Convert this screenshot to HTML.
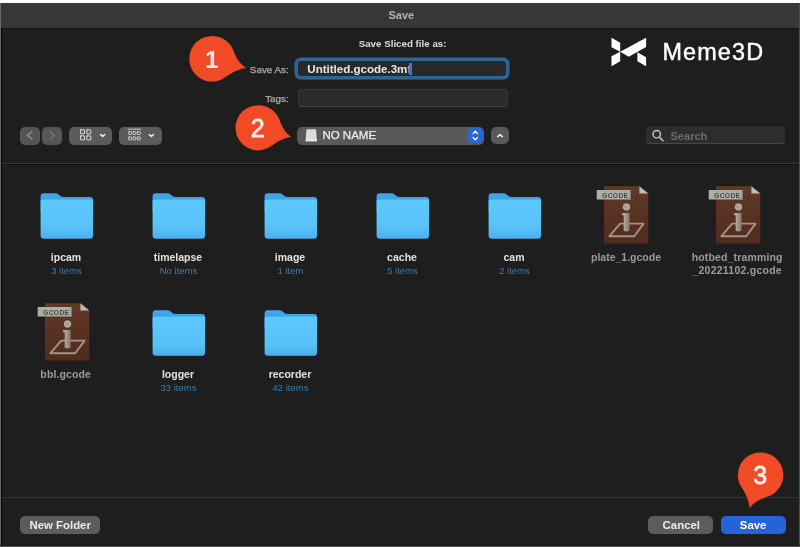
<!DOCTYPE html>
<html lang="en">
<head>
<meta charset="utf-8">
<title>Save</title>
<style>
*{box-sizing:border-box;margin:0;padding:0}
html,body{width:800px;height:547px;overflow:hidden;background:#1e1e1e}
body{font-family:"Liberation Sans",sans-serif;position:relative}
.win{filter:blur(0.45px);position:absolute;left:0;top:0;width:800px;height:547px;background:#1e1e1e;overflow:hidden}
.strip{position:absolute;left:0;top:0;width:800px;height:3px;background:#fff}
.edge-l{position:absolute;left:0;top:3px;width:1px;height:544px;background:#686868}
.edge-l2{position:absolute;left:1px;top:28px;width:1px;height:518px;background:#080808}
.edge-r{position:absolute;left:798.7px;top:3px;width:1.3px;height:544px;background:#4c4c4c}
.edge-b{position:absolute;left:0;top:545px;width:800px;height:2px;background:linear-gradient(180deg,#1a1a1a 0,#1a1a1a 0.7px,#565656 0.7px)}
.titlebar{position:absolute;left:0;top:3px;width:800px;height:26px;background:#373737;border-bottom:1px solid #121212}
.t{position:absolute;white-space:nowrap;line-height:1}
.c{width:200px;text-align:center}
.r{width:200px;text-align:right}
.b{font-weight:bold}
.btn{position:absolute;background:#5b5b5b;border-radius:5px}
.sep{position:absolute;left:2px;width:797px;height:1px;background:#353535}
.ico{position:absolute;overflow:visible}
.name{color:#e2e2e2;font-size:10.5px;font-weight:bold}
.gname{color:#9b9b9b;font-size:10.5px;font-weight:bold}
.cnt{color:#3c7cb0;font-size:9.5px}
</style>
</head>
<body>
<div class="win">
  <div class="titlebar"></div>
  <div class="t c b" style="left:301.4px;top:9.9px;font-size:11px;color:#b2b2b2">Save</div>

  <!-- HEADER -->
  <div class="t b" style="left:358.7px;top:39px;font-size:9.75px;color:#dedede">Save Sliced file as:</div>

  <div class="t r" style="left:88.8px;top:64.9px;font-size:9.9px;color:#b0b0b0;-webkit-text-stroke:0.25px #b0b0b0">Save As:</div>
  <div style="position:absolute;left:298px;top:61px;width:208px;height:15.4px;background:#29292b;border-radius:3px;box-shadow:0 0 0 3.3px #2d6694,0 0 0.5px 3.9px #1a3f60"></div>
  <div class="t b" style="left:307.3px;top:63.7px;font-size:11.55px;color:#e9e9e9">Untitled.gcode.3mf</div>
  <div style="position:absolute;left:409.3px;top:62.5px;width:2.6px;height:12.8px;background:#3b7bd6"></div>

  <div class="t r" style="left:88.8px;top:93.8px;font-size:9.9px;color:#b0b0b0;-webkit-text-stroke:0.25px #b0b0b0">Tags:</div>
  <div style="position:absolute;left:298px;top:89px;width:210px;height:17.5px;background:#2b2b2b;border:1px solid #383838;border-bottom-color:#464646;border-radius:4px"></div>

  <!-- logo -->
  <svg class="ico" style="left:600px;top:30px" width="60" height="45" viewBox="600 30 60 45">
    <g fill="#ffffff">
      <polygon points="611.5,37.8 620.2,42.8 620.2,51.8 611.5,47.3"/>
      <polygon points="611.5,56.3 620.2,51.8 620.2,61.3 611.5,66.2"/>
      <polygon points="620.2,51.8 646.1,37.8 646.1,46.9 628.8,56.7"/>
      <polygon points="637.4,52.2 646.1,57.2 646.1,66.2 637.4,61.3"/>
    </g>
  </svg>
  <div class="t" style="left:662.4px;top:40.6px;font-size:23.4px;color:#fff;letter-spacing:1.15px;-webkit-text-stroke:0.45px #fff">Meme3D</div>

  <!-- markers -->
  <svg class="ico" style="left:180px;top:30px" width="80" height="60" viewBox="180 30 80 60">
    <path d="M212 36 A22.8 22.8 0 1 0 226 76.8 C233 71.5 239 69 246 67.9 C240 64 236 58 233.6 51 A22.8 22.8 0 0 0 212 36 Z" fill="#f04a26"/>
    <text x="211.8" y="67.9" font-family="Liberation Sans, sans-serif" font-size="24.5" font-weight="bold" fill="#fdeee6" text-anchor="middle">1</text>
  </svg>
  <svg class="ico" style="left:225px;top:95px" width="80" height="60" viewBox="225 95 80 60">
    <path d="M258 105.2 A22.6 22.6 0 1 0 272 145.6 C279 140.3 284.5 138 291 136.7 C285.5 133 282 127 279.6 120 A22.6 22.6 0 0 0 258 105.2 Z" fill="#f04a26"/>
    <text x="257.7" y="137.2" font-family="Liberation Sans, sans-serif" font-size="25" fill="#fdeee6" stroke="#fdeee6" stroke-width="0.85" stroke-linejoin="round" text-anchor="middle">2</text>
  </svg>
  <!--HEADER-END-->

  <!-- TOOLBAR -->

  <div class="btn" style="left:20px;top:127px;width:20.3px;height:17.5px;background:#555"></div>
  <div class="btn" style="left:41.8px;top:127px;width:20.5px;height:17.5px;background:#555"></div>
  <div class="btn" style="left:69.3px;top:127px;width:42.7px;height:17.5px"></div>
  <div class="btn" style="left:119px;top:127px;width:42.6px;height:17.5px"></div>
  <svg class="ico" style="left:15px;top:120px" width="155" height="30" viewBox="15 120 155 30" fill="none" stroke-linecap="round" stroke-linejoin="round">
    <path d="M31.9 131.7 L27.4 135.3 L31.9 138.9" stroke="#8c8c8c" stroke-width="1.5"/>
    <path d="M50 131.7 L54.5 135.3 L50 138.9" stroke="#707070" stroke-width="1.5"/>
    <g stroke="#e8e8e8" stroke-width="0.9">
      <rect x="80.5" y="129.8" width="4" height="4" rx="0.4"/><rect x="86.8" y="129.8" width="4" height="4" rx="0.4"/>
      <rect x="80.5" y="135.9" width="4" height="4" rx="0.4"/><rect x="86.8" y="135.9" width="4" height="4" rx="0.4"/>
    </g>
    <path d="M100.5 134.5 L102.6 136.5 L104.7 134.5" stroke="#f0f0f0" stroke-width="1.5"/>
    <g stroke="#e4e4e4" stroke-width="0.8">
      <path d="M128.2 129.2 H140.6"/>
      <rect x="128.6" y="131.6" width="2.9" height="2.9" rx="0.5"/><rect x="133" y="131.6" width="2.9" height="2.9" rx="0.5"/><rect x="137.4" y="131.6" width="2.9" height="2.9" rx="0.5"/>
      <rect x="128.6" y="137" width="2.9" height="2.9" rx="0.5"/><rect x="133" y="137" width="2.9" height="2.9" rx="0.5"/><rect x="137.4" y="137" width="2.9" height="2.9" rx="0.5"/>
    </g>
    <path d="M149.3 134.5 L151.4 136.5 L153.5 134.5" stroke="#f0f0f0" stroke-width="1.5"/>
  </svg>

  <!-- path popup -->
  <div class="btn" style="left:297px;top:126.5px;width:186.6px;height:18px;background:#595959"></div>
  <div style="position:absolute;left:467.5px;top:127.6px;width:15.6px;height:15.8px;border-radius:4px;background:#2966d6"></div>
  <svg class="ico" style="left:300px;top:125px" width="30" height="22" viewBox="300 125 30 22">
    <path d="M307 129.3 H315.6 Q316.1 129.3 316.2 129.9 L316.8 139.5 V140.7 Q316.8 141.3 316.2 141.3 H306.3 Q305.7 141.3 305.7 140.7 V139.5 L306.4 129.9 Q306.5 129.3 307 129.3 Z" fill="#dadada"/>
    <path d="M305.7 139.4 H316.8 V140.7 Q316.8 141.3 316.2 141.3 H306.3 Q305.7 141.3 305.7 140.7 Z" fill="#efefef"/>
  </svg>
  <div class="t" style="left:322.4px;top:130.2px;font-size:11.5px;color:#ececec;-webkit-text-stroke:0.25px #ececec">NO NAME</div>
  <svg class="ico" style="left:465px;top:125px" width="50" height="22" viewBox="465 125 50 22" fill="none" stroke="#fff" stroke-linecap="round" stroke-linejoin="round">
    <path d="M473 133.6 L475.3 131.2 L477.6 133.6 M473 137.4 L475.3 139.8 L477.6 137.4" stroke-width="1.3"/>
  </svg>
  <div class="btn" style="left:491.4px;top:127px;width:17.2px;height:17.2px;background:#595959"></div>
  <svg class="ico" style="left:490px;top:125px" width="22" height="22" viewBox="490 125 22 22" fill="none" stroke="#f2f2f2" stroke-linecap="round" stroke-linejoin="round">
    <path d="M497.8 136.6 L500 134.5 L502.2 136.6" stroke-width="1.5"/>
  </svg>

  <!-- search -->
  <div style="position:absolute;left:646px;top:126px;width:138.7px;height:18.3px;background:#2d2d2d;border-radius:4px;border-bottom:1px solid #474747"></div>
  <svg class="ico" style="left:648px;top:126px" width="20" height="20" viewBox="648 126 20 20" fill="none" stroke="#c9c9c9" stroke-linecap="round">
    <circle cx="656.7" cy="134.2" r="3.7" stroke-width="1.4"/>
    <path d="M659.5 137.2 L663 140.8" stroke-width="1.6"/>
  </svg>
  <div class="t b" style="left:670.4px;top:130.9px;font-size:11.1px;color:#6b6b6b">Search</div>

  <div class="sep" style="top:163.3px;background:#383838"></div>
  <div class="sep" style="top:164.3px;background:#111;height:1.2px"></div>
  <!--TOOLBAR-END-->

  <!-- GRID -->

  <svg width="0" height="0" style="position:absolute">
    <defs>
      <linearGradient id="ff" x1="0" y1="0" x2="0" y2="1"><stop offset="0" stop-color="#5ec8fb"/><stop offset="0.7" stop-color="#58c2f9"/><stop offset="1" stop-color="#46b0f1"/></linearGradient>
      <linearGradient id="fb" x1="0" y1="0" x2="0" y2="1"><stop offset="0" stop-color="#3fa8ec"/><stop offset="1" stop-color="#3398e2"/></linearGradient>
      <linearGradient id="pg" x1="0" y1="0" x2="0" y2="1"><stop offset="0" stop-color="#613726"/><stop offset="1" stop-color="#502c1f"/></linearGradient>
      <linearGradient id="ib" x1="0" y1="0" x2="1" y2="0"><stop offset="0" stop-color="#bdb5ab"/><stop offset="1" stop-color="#81776e"/></linearGradient>
      <symbol id="folder" viewBox="0 0 54 48" overflow="visible">
        <path d="M0.6 4.6 Q0.6 1.3 3.8 1.3 H15.2 Q17.2 1.3 18.6 2.5 L20.8 4.3 Q22 5 24 5 H50 Q53.1 5 53.1 8 V20 H0.6 Z" fill="url(#fb)"/>
        <path d="M0.6 9.6 Q0.6 7.4 2.8 7.4 H50.9 Q53.1 7.4 53.1 9.6 V43.6 Q53.1 46.7 50 46.7 H3.8 Q0.6 46.7 0.6 43.6 Z" fill="url(#ff)"/>
      </symbol>
      <symbol id="gfile" viewBox="0 0 54 60" overflow="visible">
        <path d="M8 1.2 H43.4 L52.3 8.6 V58.4 H8 Z" fill="url(#pg)"/>
        <path d="M43.4 1.2 L52.3 8.6 H43.4 Z" fill="#bdbab4"/>
        <path d="M0.7 5 H35 V14.6 H0.7 Z" fill="#adada5"/>
        <path d="M33.6 5 H35 V14.6 H33.6 Z" fill="#7d8577"/>
        <text x="6.1" y="12.7" font-family="Liberation Sans, sans-serif" font-weight="bold" font-size="6.7" letter-spacing="0.35" fill="#3d4a3e">GCODE</text>
        <path d="M13.3 51.3 L24.2 38.6 H47.6 L38.2 51.3 Z" fill="none" stroke="#a39584" stroke-width="1.9" stroke-linejoin="round"/>
        <path d="M26.2 28 H33.6 V45.8 Q30.6 47 27.7 45.8 V30.2 H26.2 Z" fill="url(#ib)"/>
        <circle cx="30.5" cy="22" r="3.3" fill="#aaa197" stroke="#c4bcb2" stroke-width="0.8"/>
      </symbol>
    </defs>
  </svg>

  <svg class="ico" style="left:40.0px;top:192.2px" width="54" height="48"><use href="#folder"/></svg>
  <div class="t c name" style="left:-34.0px;top:251.6px">ipcam</div>
  <div class="t c cnt" style="left:-33.5px;top:265.5px">3 items</div>
  <svg class="ico" style="left:152.0px;top:192.2px" width="54" height="48"><use href="#folder"/></svg>
  <div class="t c name" style="left:78.0px;top:251.6px">timelapse</div>
  <div class="t c cnt" style="left:78.5px;top:265.5px">No items</div>
  <svg class="ico" style="left:264.0px;top:192.2px" width="54" height="48"><use href="#folder"/></svg>
  <div class="t c name" style="left:190.0px;top:251.6px">image</div>
  <div class="t c cnt" style="left:190.5px;top:265.5px">1 item</div>
  <svg class="ico" style="left:376.0px;top:192.2px" width="54" height="48"><use href="#folder"/></svg>
  <div class="t c name" style="left:302.0px;top:251.6px">cache</div>
  <div class="t c cnt" style="left:302.5px;top:265.5px">5 items</div>
  <svg class="ico" style="left:488.0px;top:192.2px" width="54" height="48"><use href="#folder"/></svg>
  <div class="t c name" style="left:414.0px;top:251.6px">cam</div>
  <div class="t c cnt" style="left:414.5px;top:265.5px">2 items</div>
  <svg class="ico" style="left:596px;top:185px" width="54" height="60"><use href="#gfile"/></svg>
  <div class="t c gname" style="left:526.0px;top:251.6px">plate_1.gcode</div>
  <svg class="ico" style="left:708.2px;top:185px" width="54" height="60"><use href="#gfile"/></svg>
  <div class="t c gname" style="left:637.2px;top:251.6px;letter-spacing:0.15px">hotbed_tramming</div>
  <div class="t c gname" style="left:637.2px;top:265.2px;letter-spacing:0.25px">_20221102.gcode</div>
  <svg class="ico" style="left:36.7px;top:302.2px" width="54" height="60"><use href="#gfile"/></svg>
  <div class="t c gname" style="left:-34.3px;top:368.6px;letter-spacing:0.12px">bbl.gcode</div>
  <svg class="ico" style="left:152.0px;top:309.2px" width="54" height="48"><use href="#folder"/></svg>
  <div class="t c name" style="left:78.0px;top:368.6px">logger</div>
  <div class="t c cnt" style="left:78.5px;top:382.5px">33 items</div>
  <svg class="ico" style="left:264.0px;top:309.2px" width="54" height="48"><use href="#folder"/></svg>
  <div class="t c name" style="left:190.0px;top:368.6px">recorder</div>
  <div class="t c cnt" style="left:190.5px;top:382.5px">42 items</div>
  <!--GRID-END-->

  <!-- FOOTER -->

  <div class="sep" style="top:497px;background:#323232"></div>
  <div class="btn" style="left:20px;top:516.2px;width:80.3px;height:17.8px;background:#5c5c5c"></div>
  <div class="t c b" style="left:-39.8px;top:519.7px;font-size:11.4px;color:#ececec">New Folder</div>
  <div class="btn" style="left:648.4px;top:516.3px;width:64.8px;height:17.7px;background:#5c5c5c"></div>
  <div class="t c b" style="left:581.3px;top:519.7px;font-size:11.4px;color:#ececec">Cancel</div>
  <div class="btn" style="left:720.8px;top:516.3px;width:65.2px;height:17.7px;background:#2563d9"></div>
  <div class="t c b" style="left:653.1px;top:519.7px;font-size:11.4px;color:#fff">Save</div>
  <svg class="ico" style="left:720px;top:440px" width="80" height="80" viewBox="720 440 80 80">
    <path d="M760.5 452.4 A22.6 22.6 0 0 0 742.4 488.6 C746.6 495 748.6 501.3 749.8 508.2 C753.2 502.6 759 500.2 766.3 496.9 A22.6 22.6 0 0 0 760.5 452.4 Z" fill="#f04a26"/>
    <text x="760.3" y="484.3" font-family="Liberation Sans, sans-serif" font-size="25" fill="#fdeee6" stroke="#fdeee6" stroke-width="0.85" stroke-linejoin="round" text-anchor="middle">3</text>
  </svg>
  <!--FOOTER-END-->

</div>
<div class="strip"></div><div class="edge-l"></div><div class="edge-l2"></div><div class="edge-r"></div><div class="edge-b"></div>
</body>
</html>
